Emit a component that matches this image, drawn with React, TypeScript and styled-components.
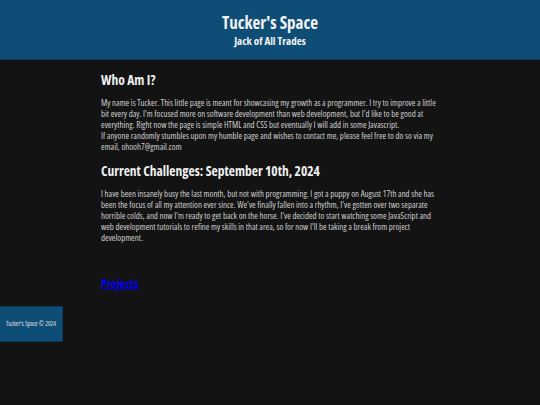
import React from "react";
import styled, { createGlobalStyle } from "styled-components";

const Global = createGlobalStyle`
  html, body { margin: 0; padding: 0; }
  body {
    background: #131313;
    font-family: "Open Sans", "Liberation Sans", sans-serif;
    font-stretch: 75%;
    color: #cfcfcf;
  }
`;

const Header = styled.header`
  background: #0e4d75;
  border-bottom: 1px solid #0b3a59;
  height: 59px;
  display: flex;
  flex-direction: column;
  align-items: center;
  justify-content: center;
  color: #f2f2f2;
`;

const Title = styled.h1`
  margin: 0;
  font-size: 17px;
  font-weight: bold;
  line-height: 22px;
`;

const Subtitle = styled.h2`
  margin: 0;
  font-size: 11px;
  font-weight: bold;
  line-height: 14px;
`;

const Main = styled.main`
  padding: 10px 100px 0 101px;
`;

const Heading = styled.h3`
  margin: 0 0 8px;
  font-size: 13.5px;
  font-weight: bold;
  line-height: 20px;
  color: #f0f0f0;
`;

const Para = styled.p`
  margin: 0 0 7.5px;
  font-size: 8.8px;
  line-height: 11px;
`;

const LinkRow = styled.div`
  margin-top: 30px;
  line-height: 16px;
`;

const Link = styled.a`
  color: #0000ee;
  font-size: 12px;
  font-weight: bold;
  text-decoration: underline;
`;

const Footer = styled.footer`
  margin-top: 14px;
  width: 62px;
  height: 34px;
  background: #0e4d75;
  border: 1px solid #0b3a59;
  border-left: none;
  display: flex;
  align-items: center;
  justify-content: center;
  font-size: 6.3px;
  color: #e0e0e0;
  white-space: nowrap;
`;

export default function App() {
  return (
    <>
      <Global />
      <Header>
        <Title>Tucker's Space</Title>
        <Subtitle>Jack of All Trades</Subtitle>
      </Header>
      <Main>
        <Heading>Who Am I?</Heading>
        <Para>
          My name is Tucker. This little page is meant for showcasing my growth as a programmer. I try to improve a little bit every day. I'm focused more on software development than web development, but I'd like to be good at everything. Right now the page is simple HTML and CSS but eventually I will add in some Javascript.
          <br />
          If anyone randomly stumbles upon my humble page and wishes to contact me, please feel free to do so via my email, ohooh7@gmail.com
        </Para>
        <Heading>Current Challenges: September 10th, 2024</Heading>
        <Para>
          I have been insanely busy the last month, but not with programming. I got a puppy on August 17th and she has been the focus of all my attention ever since. We've finally fallen into a rhythm, I've gotten over two separate horrible colds, and now I'm ready to get back on the horse. I've decided to start watching some JavaScript and web development tutorials to refine my skills in that area, so for now I'll be taking a break from project development.
        </Para>
        <LinkRow>
          <Link href="#">Projects</Link>
        </LinkRow>
      </Main>
      <Footer>Tucker's Space © 2024</Footer>
    </>
  );
}
